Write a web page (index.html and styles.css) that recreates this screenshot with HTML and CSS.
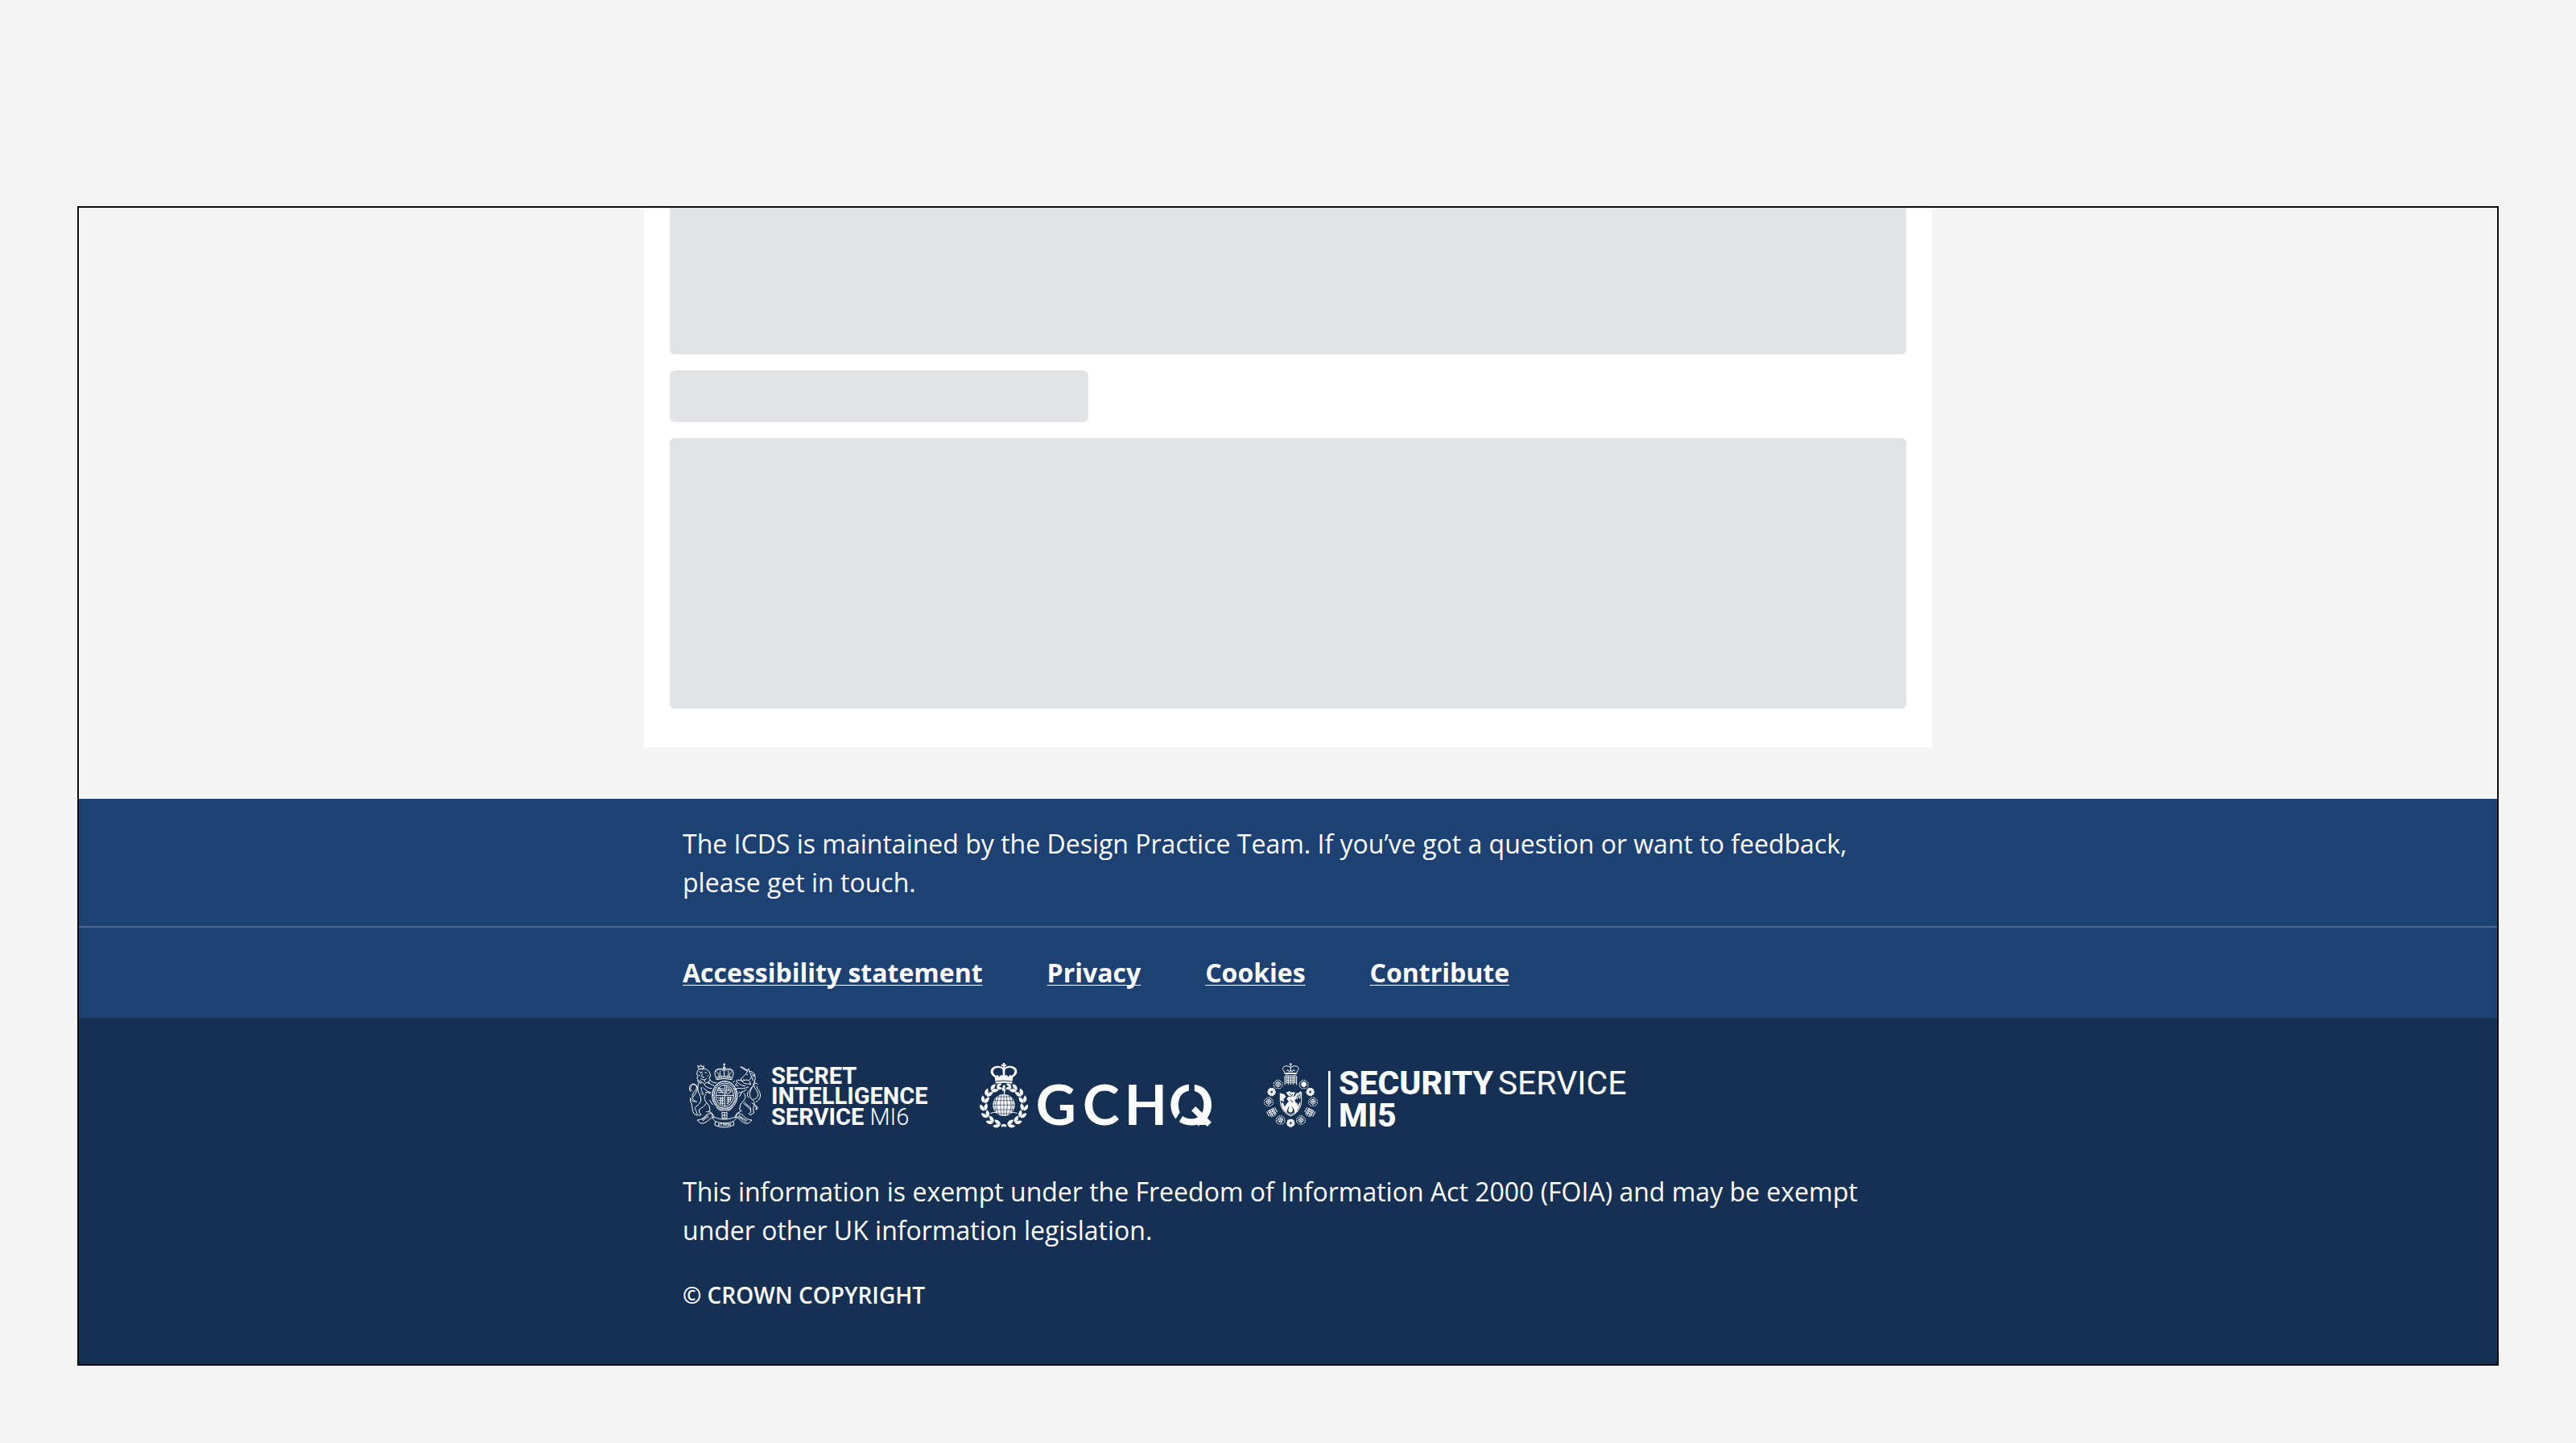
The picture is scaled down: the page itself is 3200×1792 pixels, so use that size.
FILE: index.html
```html
<!DOCTYPE html>
<html lang="en">
<head>
<meta charset="utf-8">
<meta name="viewport" content="width=device-width, initial-scale=1">
<title>Footer</title>
<link rel="stylesheet" href="styles.css">
</head>
<body>
<div class="frame">
  <main class="page">
    <div class="panel">
      <div class="block block-cut"></div>
      <div class="block block-title"></div>
      <div class="block block-body"></div>
    </div>
  </main>
  <footer class="footer">
    <div class="band band-note">
      <p class="inner">The ICDS is maintained by the Design Practice Team. If you’ve got a question or want to feedback, please get in touch.</p>
    </div>
    <nav class="band band-links" aria-label="Footer">
      <ul class="inner links">
        <li><a href="#accessibility">Accessibility statement</a></li>
        <li><a href="#privacy">Privacy</a></li>
        <li><a href="#cookies">Cookies</a></li>
        <li><a href="#contribute">Contribute</a></li>
      </ul>
    </nav>
    <div class="band band-legal">
      <div class="inner legal">
        <div class="logos">
          <svg class="logo logo-mi6" viewBox="24 60 936 240" role="img" aria-label="Secret Intelligence Service MI6">
            <g class="line">
              <!-- crown -->
              <path d="M179 61v12M174 66h10M150 122c-2-12-9-20-5-31 5-12 25-11 33-5 10-6 29-7 34 5 4 11-3 19-5 31q-29-7-57 0zM179 76v34M152 94c4 4 8 10 9 18M206 94c-4 4-8 10-9 18M165 90c-4 6-2 14 3 20M193 90c4 6 2 14-3 20M151 113q28-7 55 0"/>
              <circle cx="179" cy="78" r="4"/><path class="beads" d="M153 118q27-6 52 0M146 92q12-12 29-4M184 88q18-6 26 5"/>
              <!-- shield and garter -->
              <ellipse cx="181" cy="182" rx="47" ry="54"/><ellipse cx="181" cy="182" rx="40" ry="47"/>
              <ellipse cx="181" cy="182" rx="33" ry="40"/><path d="M181 142v80M149 181h64"/>
              <path class="beads" d="M137 180a44 51 0 0 1 88 0a44 51 0 0 1-88 0"/>
              <path d="M155 155l22 2M153 163h24M156 171l21-2M158 150c5 8 9 16 17 25M187 148c9 3 15 10 18 18-6 8-13 9-19 8zM190 155l12 14M188 166l13-10M154 188c8 5 16 6 24 2M156 198c8 4 14 4 22 0M161 208c6 3 11 4 17 2M166 186v28M173 185v32M188 188l20 1M188 196h18M187 204h15M187 212h8M194 186v25M202 186v17"/>
              <!-- lion -->
              <path d="M84 82l-4-12 7 5 5-8 4 8 7-4-2 13zM82 86c-6 8-6 18-1 24l-4 8 5 4-2 7 7-1 3 8 8-4 8 8 7-8 10 5-2-9 7-4-6-7 6-9c-1-8-5-17-12-22-10-7-26-6-34 0z"/>
              <path d="M90 97l8-3M106 95l8 2M98 99c-2 7-4 10-2 14h9M91 118c8 6 16 6 23 0M84 104l6 5M120 106l-5 5M90 124l4 6M104 123l4 8M86 92l6 4"/>
              <path d="M85 132c-4 9-6 22-3 32 2 12 11 20 10 34 0 12-12 20-20 26-5 5 2 12 4 20l3 8c5 4 9 4 14 1l-6-7-2-12c9-7 22-12 27-24M128 126c10 8 16 9 23 8M120 132c9 8 16 12 22 12M104 142c9 8 19 14 29 13M100 152c11 9 17 17 30 18M112 174c-8 9-9 20-2 30l13 16 3 18c-4 4-9 6-14 3M108 170c8-3 13 2 20 5M124 198l12 18M94 150c-3 9 3 18 8 25M92 172l10 8"/>
              <path d="M78 205c-15-3-20-15-17-27 3-10 16-16 15-28-1-10-14-12-19-5-6 8-4 18 2 20M64 187c2-9 14-16 15-30 2-19-19-25-27-12-4 7-3 17 2 22M57 210c3 14 2 28 10 40l12 6M72 204c-10 0-17-4-20-13M54 190c-2 12-1 16 3 20"/>
              <!-- unicorn -->
              <path d="M238 74l28 18M243 74l24 14M264 89l6-7 2 9c15 0 24 12 22 26l-2 18M266 91c-5 10-10 14-18 22l-7 6 5 9 14-5 10 2c6 4 8 10 6 18M262 103l5 2M272 92c6 8 4 14 9 19s2 12 7 16M280 98l8 12M273 122c6-2 7-6 6-11M292 102l-4 9M250 120l4 4"/>
              <path d="M290 132c-3 17-12 24-15 38-3 16 4 23 13 32 7 8 1 19-1 30l3 14-14 8-5-5 7-6-1-16c-7-8-18-12-22-22M276 138c-11 0-19 2-29-8-9-8-18-8-24-2l12 10c8 6 15 8 23 7M270 149c-12 6-28 8-38 5l-14 4M262 159c-10 8-22 11-31 13M252 172c5 8 8 15 2 25l-14 17-4 20 9 6M246 168l-11 18M268 168c-4 9-4 14 2 22M281 150c-4 8-8 12-12 18M226 134l-6 8 12 4M218 126l-6 7"/>
              <path d="M286 196c16-2 21-12 18-24-3-12-15-18-14-29 1-8 11-9 14-3M296 206c16-8 21-22 15-37-4-10-12-14-10-23M281 210c14 4 20 10 17 22M292 222c8-3 13 2 11 9-2 4-8 3-8 0M250 210c10 9 20 14 24 23"/>
              <!-- scroll -->
              <path d="M78 273c17-1 25-9 32-17 7-6 15-9 24-7l8 13c-13 1-19 9-27 16-8 6-17 9-26 6zM282 273c-17-1-25-9-32-17-7-6-15-9-24-7l-8 13c13 1 19 9 27 16 8 6 17 9 26 6zM134 249c-2 14 4 20 12 29 22 8 46 8 67 0 9-9 14-15 12-29M146 278l-2 14c24 10 47 10 71 0l-2-14M142 262c26 11 50 11 76 0M171 243v23h18v-23c-6 3-12 3-18 0zM180 246v18M174 255h12M151 226c6 10 14 13 22 10M209 226c-6 10-14 13-22 10M120 240l14 8M240 240l-14 8"/>
            </g>
            <g class="motto"><text x="156" y="295">ET MON</text><text x="99" y="277" transform="rotate(-36 99 277)">DIEU</text><text x="229" y="262" transform="rotate(32 229 262)">DROIT</text></g>
            <text class="mi6-name" x="354" y="137">SECRET</text>
            <text class="mi6-name" x="354" y="213">INTELLIGENCE</text>
            <text class="mi6-name" x="354" y="290">SERVICE <tspan class="mi6-light">MI6</tspan></text>
          </svg>
          <svg class="logo logo-gchq" viewBox="48 60 888 240" role="img" aria-label="GCHQ">
            <defs>
              <g id="leaves"><path d="M-1 3C-14-2-16-12-10-24C1-16 2-7-1 3zM2 4C-2-8 3-18 15-22C18-10 14 0 2 4z"/></g>
            </defs>
            <g class="solid">
              <path d="M137 60h8l-1 6 6-1v8l-6-1 2 7h-10l2-7-6 1v-8l6 1z"/>
              <path d="M111 137l-4-24c-12-7-19-18-13-30 7-13 34-16 43-4h8c9-12 36-9 43 4 6 12-1 23-13 30l-4 24q-30-6-60 0zM112 108l5-4 7 8 8-8 5 4V87c-6-12-26-11-34-1-5 7 1 16 9 22zM170 108l-5-4-7 8-8-8-5 4V87c6-12 26-11 34-1 5 7-1 16-9 22z" fill-rule="evenodd"/>
              <path d="M138 143h10l-5 15 5-1-6 25-2-19-6 1z"/>
              <circle cx="141" cy="217" r="41"/>
              <g id="wreath-left">
                <use href="#leaves" transform="translate(125 291) rotate(-78)"/>
                <use href="#leaves" transform="translate(99 281) rotate(-58)"/>
                <use href="#leaves" transform="translate(79 261) rotate(-35)"/>
                <use href="#leaves" transform="translate(68 235) rotate(-14)"/>
                <use href="#leaves" transform="translate(68 206) rotate(10)"/>
                <use href="#leaves" transform="translate(77 180) rotate(31)"/>
                <use href="#leaves" transform="translate(96 161) rotate(55)"/>
                <use href="#leaves" transform="translate(116 149) rotate(78) scale(.8)"/>
              </g>
              <use href="#wreath-left" transform="translate(283 0) scale(-1 1)"/>
              <path d="M131 291l10-4 10 4-2 8-8-3-8 3z"/>
            </g>
            <path class="line" stroke-width="3" d="M91 248q12-6 24-3M191 248q-12-6-24-3"/>
            <g class="cut">
              <path stroke-width="2" d="M141 177v80M100 217h82M104 200h74M104 234h74M114 186h54M114 249h54M123 181q-18 36 0 73M159 181q18 36 0 73M132 178q-8 38 0 78M150 178q8 38 0 78M110 192q-8 25 1 51M172 192q8 25-1 51"/>
              <path stroke-width="3" d="M111 129q30-6 60 0"/>
              <path stroke-width="3" stroke-dasharray="2 5" d="M97 89q12-16 36-6M149 83q24-10 36 6"/>
            </g>
            <text class="gchq-name" x="260 435 590 755" y="290">GCHQ</text>
            <g class="cut"><path stroke-width="21" d="M841 128v44"/><path stroke-width="16" d="M810 238l-29 47"/><path stroke-width="34" d="M868 308h68"/></g>
            <path class="line" stroke-width="22" d="M848 230l59 59"/>
          </svg>
          <svg class="logo logo-mi5" viewBox="54 60 1368 240" role="img" aria-label="Security Service MI5">
            <defs>
              <g id="rose" class="line" stroke-width="3">
                <path d="M0-15Q7-18 10-10Q18-8 15 0Q19 8 11 11Q8 18 0 14Q-8 18-11 11Q-19 8-15 0Q-18-8-10-10Q-7-18 0-15z" stroke-dasharray="6 2"/>
                <path d="M0-9Q6-10 8-3Q11 3 5 7Q0 11-5 7Q-11 3-8-3Q-6-10 0-9zM0-9v5M8-3l-4 1M5 7l-3-4M-5 7l3-4M-8-3l4 1"/><circle r="3"/>
              </g>
              <g id="petals" class="solid">
                <g id="petal"><path d="M0-3C-5-5-10-11-7-15L0-14L7-15C10-11 5-5 0-3z"/></g>
                <use href="#petal" transform="rotate(72)"/><use href="#petal" transform="rotate(144)"/><use href="#petal" transform="rotate(216)"/><use href="#petal" transform="rotate(288)"/>
              </g>
              <g id="gate" class="line" stroke-width="3"><path d="M-12-13h24M-10-13v25M-4-13v28M4-13v28M10-13v25M-10-5h20M-10 3h20M-17-14v20M17-14v20"/></g>
            </defs>
            <g class="line" stroke-width="3">
              <!-- crown and portcullis -->
              <path d="M160 60v14M155 65h10M138 100l-3-10c-6-6-6-14 2-17 8-4 17-1 23 4 6-5 15-8 23-4 8 3 8 11 2 17l-3 10q-22-5-44 0zM160 76v17M144 91l5-6 5 8 6-7 6 7 5-8 5 6"/>
              <path stroke-width="5" d="M139 101q21-5 42 0"/>
              <path d="M141 108h38M144 108v29M151 108v33M160 108v33M169 108v33M176 108v29M144 116h32M144 124h32M144 132h32M138 108v34M182 108v34"/>
            </g>
            <use href="#rose" transform="translate(113 140)"/><use href="#rose" transform="translate(209 140)"/><circle class="solid" cx="209" cy="140" r="8"/>
            <use href="#petals" transform="translate(89 168)"/><use href="#petals" transform="translate(233 168)"/>
            <use href="#rose" transform="translate(78 205)"/><use href="#rose" transform="translate(243 205)"/>
            <use href="#gate" transform="translate(92 246) rotate(-28)"/><use href="#gate" transform="translate(230 246) rotate(28)"/>
            <use href="#rose" transform="translate(122 273)"/><use href="#rose" transform="translate(198 273)"/>
            <use href="#petals" transform="translate(160 284)"/>
            <!-- shield with winged sea lion -->
            <path class="line" stroke-width="3" d="M121 172v30c0 27 17 47 39 56 22-9 40-29 40-56v-34"/>
            <path class="solid" d="M121 173l15 3 6 10-9 10 3 8-14-4zM143 170l13-5 6 5 12-2 2 6-8 12 8-3 8-13 3 4 10-10 1 12-3 18-7-7-3 9-5-4-4 8 8 10 3 14-4 18-9 10c3-14-2-23-11-31l-12 5-5 11-1 10-9-12-8-17 10 4 8-11 7-8-8-9 5-7 9-2-9-4z"/>
            <path class="solid" d="M125 206l8 4 4 16 6 19-8-9c-7-8-10-18-10-30zM151 237c0-7 7-16 10-18 3 7 9 11 7 19-2 9-16 9-17-1zM188 216l8-11c0 16-8 31-20 41 7-10 11-20 12-30z"/>
            <path class="line" stroke-width="3" d="M144 241c5 13 21 15 30 3"/>
            <path class="cut" stroke-width="3" d="M154 174l10 8M168 176l-9 12M182 190l6-12M190 188l5-14M159 196l8 11M176 199l5 10"/>
            <path class="line" stroke-width="8" d="M304 90v210"/>
            <text class="mi5-name" x="339" y="178">SECURITY</text>
            <text class="mi5-light" x="932" y="178">SERVICE</text>
            <text class="mi5-name" x="339" y="297">MI5</text>
          </svg>
        </div>
        <p>This information is exempt under the Freedom of Information Act 2000 (FOIA) and may be exempt under other UK information legislation.</p>
        <p class="copyright">© CROWN COPYRIGHT</p>
      </div>
    </div>
  </footer>
</div>
</body>
</html>
```
FILE: styles.css
```css
* {
  box-sizing: border-box;
}

body {
  margin: 0;
  padding: 256px 96px 96px;
  background: #f4f4f4;
  color: #fff;
  font-family: "Open Sans", "Noto Sans", sans-serif;
  font-size: 32px;
  line-height: 48px;
}

p,
ul {
  margin: 0;
  padding: 0;
}

.frame {
  border: 2px solid #0b0c0f;
}

.page {
  padding-bottom: 64px;
}

.panel {
  display: flex;
  flex-direction: column;
  gap: 20px;
  max-width: 1600px;
  margin: 0 auto;
  padding: 0 32px 48px;
  background: #fff;
}

.block {
  border-radius: 6px;
  background: #e2e3e5;
}

.block-cut {
  height: 182px;
  border-radius: 0 0 6px 6px;
}

.block-title {
  width: 100%;
  max-width: 520px;
  height: 64px;
}

.block-body {
  height: 336px;
}

.inner {
  max-width: 1504px;
  margin: 0 auto;
}

.band {
  padding: 32px;
  background: #1d4173;
}

.band-note {
  padding-bottom: 30px;
  border-bottom: 2px solid #4a6790;
}

.links {
  display: flex;
  flex-wrap: wrap;
  gap: 0 80px;
  list-style: none;
}

.links a {
  color: #fff;
  font-weight: 700;
  text-decoration-line: underline;
  text-decoration-thickness: 1px;
  text-decoration-skip-ink: none;
  text-underline-offset: 3px;
}

.band-legal {
  padding: 56px 32px 62px;
  background: #163054;
}

.legal {
  display: flex;
  flex-direction: column;
  gap: 32px;
}

.logos {
  display: flex;
  flex-wrap: wrap;
  gap: 24px 56px;
  padding-bottom: 24px;
}

.copyright {
  font-size: 28px;
  font-weight: 600;
}

.logo {
  display: block;
  height: 80px;
  overflow: visible;
  fill: #fff;
}

.logo-mi6 {
  width: 312px;
}

.logo-gchq {
  width: 296px;
}

.logo-mi5 {
  width: 456px;
}

.line {
  fill: none;
  stroke: #fff;
}

.logo-mi6 .line {
  stroke-width: 3px;
}

.logo-mi6 .beads {
  stroke-width: 4px;
  stroke-dasharray: 4 3;
}

.solid {
  fill: #fff;
}

.cut {
  fill: none;
  stroke: #163054;
}

.logo text {
  font-family: Roboto, "Liberation Sans", sans-serif;
}

.logo .motto text {
  font-size: 13px;
  font-weight: 700;
}

.mi6-name {
  font-size: 87px;
  font-weight: 700;
}

.mi6-light {
  font-weight: 300;
}

.logo .gchq-name {
  font-family: Lato, "Open Sans", sans-serif;
  font-size: 207px;
  font-weight: 700;
}

.mi5-name {
  font-size: 123px;
  font-weight: 800;
}

.mi5-light {
  font-size: 123px;
  font-weight: 400;
}
```
